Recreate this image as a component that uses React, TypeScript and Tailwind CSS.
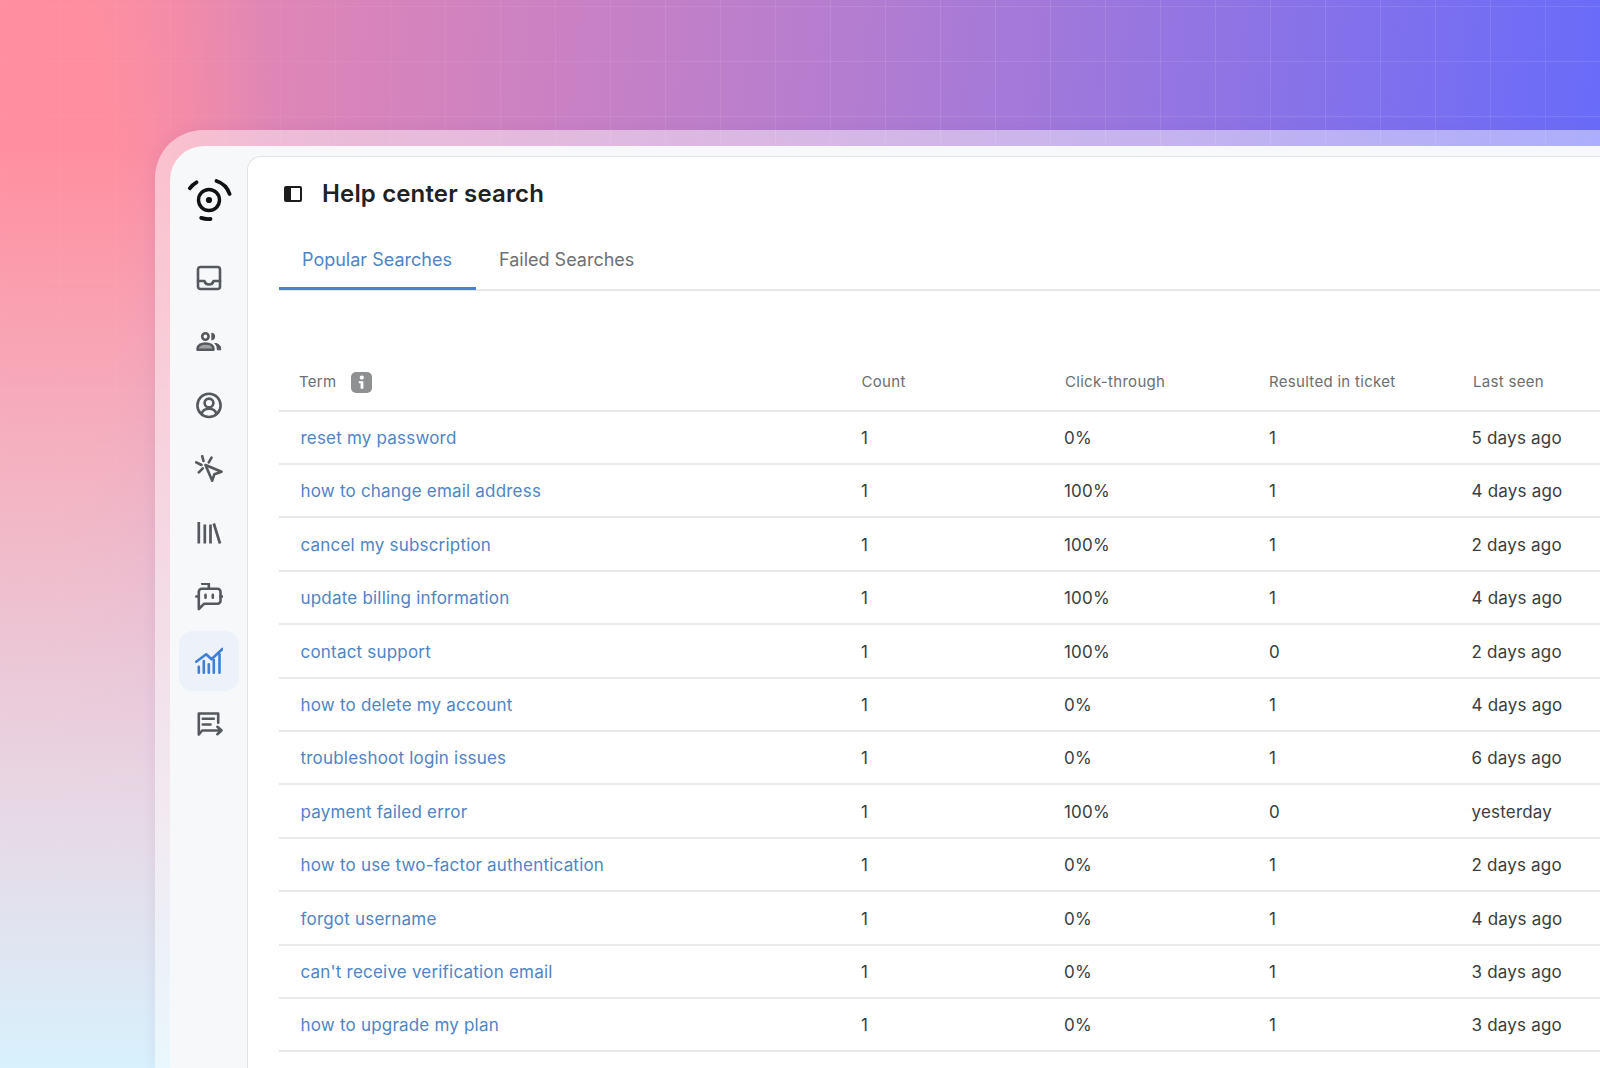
const ROWS = [
  { term: "reset my password", clicks: "0%", ticket: "1", seen: "5 days ago" },
  { term: "how to change email address", clicks: "100%", ticket: "1", seen: "4 days ago" },
  { term: "cancel my subscription", clicks: "100%", ticket: "1", seen: "2 days ago" },
  { term: "update billing information", clicks: "100%", ticket: "1", seen: "4 days ago" },
  { term: "contact support", clicks: "100%", ticket: "0", seen: "2 days ago" },
  { term: "how to delete my account", clicks: "0%", ticket: "1", seen: "4 days ago" },
  { term: "troubleshoot login issues", clicks: "0%", ticket: "1", seen: "6 days ago" },
  { term: "payment failed error", clicks: "100%", ticket: "0", seen: "yesterday" },
  { term: "how to use two-factor authentication", clicks: "0%", ticket: "1", seen: "2 days ago" },
  { term: "forgot username", clicks: "0%", ticket: "1", seen: "4 days ago" },
  { term: "can't receive verification email", clicks: "0%", ticket: "1", seen: "3 days ago" },
  { term: "how to upgrade my plan", clicks: "0%", ticket: "1", seen: "3 days ago" },
];

const COLS = "grid grid-cols-[560px_204px_204px_203px_200px]";

function Icon({ children }: { children: React.ReactNode }) {
  return (
    <svg
      width="28"
      height="28"
      viewBox="0 0 28 28"
      fill="none"
      stroke="currentColor"
      strokeWidth="2.6"
      strokeLinecap="round"
      strokeLinejoin="round"
    >
      {children}
    </svg>
  );
}

function Logo() {
  return (
    <svg width="48" height="48" viewBox="0 0 48 48" fill="none" stroke="#111" strokeWidth="3.8" strokeLinecap="round">
      <circle cx="24" cy="24" r="10.5" strokeWidth="3.4" />
      <circle cx="24" cy="24" r="3.1" fill="#111" stroke="none" />
      <path d="M31.5 5A20.5 20.5 0 0 1 44.6 18" />
      <path d="M4.8 12.3A21 21 0 0 1 11.5 6.3" />
      <path d="M16.2 41.9A21 21 0 0 0 25.5 43" />
    </svg>
  );
}

const NAV = [
  <Icon key="inbox">
    <rect x="3" y="3" width="22" height="22" rx="2.5" />
    <path d="M3 17h6.5c.5 2.5 2 3.5 4.5 3.5s4-1 4.5-3.5H25" />
  </Icon>,
  <Icon key="users">
    <circle cx="10.4" cy="8.5" r="3.2" />
    <path d="M17 5.4a3.2 3.2 0 0 1 0 6.2z" fill="currentColor" strokeWidth="1.4" />
    <path d="M2.6 21.8v-1c0-3.4 3.4-5.3 7.9-5.3s7.9 1.9 7.9 5.3v1z" fill="currentColor" fillOpacity="0.55" />
    <path d="M21.5 15.6c2.4.8 4.2 2.4 4.2 4.8v1.4h-3.4c0-2.5-.4-4.6-2.2-6z" fill="currentColor" strokeWidth="1" />
  </Icon>,
  <Icon key="profile">
    <circle cx="14" cy="13.4" r="11.6" />
    <circle cx="14" cy="11" r="4.4" />
    <path d="M6.5 22c1-3.6 4-5.2 7.5-5.2s6.5 1.6 7.5 5.2" />
  </Icon>,
  <Icon key="click">
    <path d="M10.5 10 26.5 16.7 19.4 19.2 17.2 25.7z" />
    <path d="M7.2 1.2 8.5 6M16.5 2.7 13.8 7.3M1.2 7.3 6.5 10M3.8 17.3 7.8 13.3" />
  </Icon>,
  <Icon key="library">
    <path d="M3.8 3V24.5M9.8 5.5V24.5M15.5 5.5V24.5M18.8 4.5 25 24.5" strokeLinecap="butt" strokeWidth="2.7" />
  </Icon>,
  <Icon key="bot">
    <path d="M6.8 5.8h15.7a3 3 0 0 1 3 3v9a3 3 0 0 1-3 3H9l-5.2 5.2V8.8a3 3 0 0 1 3-3z" />
    <path d="M7.2 .8h6.6v5M1.3 13.5h2.4M25.6 13.5h2M10.5 11.8v3M17.8 11.8v3" />
  </Icon>,
  <Icon key="chart">
    <path d="M1.2 14.7 11.2 7.3 16.5 12.3 27.4 2M3.8 25.7v-6M8.8 25.7V14M13.8 25.7v-8.4M18.8 25.7V13M24.5 25.7V7.3" />
  </Icon>,
  <Icon key="report">
    <path d="M16.5 19.5H7.2l-3.4 4v-21h19.4v9.3M7.8 7.8h11M7.8 13.5h7.7M15.8 19.5h10.7M22.4 15.8l4.1 3.7-4.1 3.7" />
  </Icon>,
];

export default function App() {
  return (
    <div className="relative h-[1068px] w-[1600px] overflow-hidden bg-[linear-gradient(180deg,rgba(240,200,215,0)_14%,rgba(232,215,228,1)_75%,rgba(216,241,253,1)_100%),radial-gradient(ellipse_250px_800px_at_30px_250px,#ff8fa0_0,#ff8fa0_35%,rgba(255,143,160,0)_100%),linear-gradient(96deg,#f08ca9_0%,#d884bb_22%,#b47dd0_50%,#8f74e4_72%,#5f69ff_100%)] pl-[155px] pt-[130px] [font-family:Inter,sans-serif]">
      <div className="pointer-events-none absolute inset-0 bg-[linear-gradient(to_right,rgba(255,255,255,0.1)_1px,transparent_1px),linear-gradient(to_bottom,rgba(255,255,255,0.1)_1px,transparent_1px)] bg-[size:55px_55px] bg-[position:5px_6px] [mask-image:linear-gradient(to_right,rgba(0,0,0,0.25),#000_60%)]" />
      <div className="relative h-full rounded-tl-[48px] bg-white/45 pl-[15px] pt-[16px] shadow-[0_0_14px_rgba(120,90,160,0.12)]">
        <div className="flex h-full rounded-tl-[34px] bg-[#f6f8fa]">
          <aside className="flex w-[77px] shrink-0 flex-col items-center pt-[30px]">
            <Logo />
            <nav className="mt-[24px] flex flex-col gap-[3.8px]">
              {NAV.map((icon, i) => (
                <div
                  key={i}
                  className={
                    i === 6
                      ? "flex h-[60px] w-[60px] items-center justify-center rounded-[14px] bg-[#edf2fa] text-[#3f7fd6]"
                      : "flex h-[60px] w-[60px] items-center justify-center text-[#55585c]"
                  }
                >
                  {icon}
                </div>
              ))}
            </nav>
          </aside>

          <main className="mt-[10px] min-w-0 flex-1 overflow-hidden rounded-tl-[14px] border-l border-t border-[#dfe2e5] bg-white">
            <header className="flex h-[74px] items-center gap-[20px] pl-[36px]">
              <svg width="18" height="16" viewBox="0 0 18 16">
                <rect x="1" y="1" width="16" height="14" rx="1" fill="none" stroke="#1c1c1c" strokeWidth="2" />
                <rect x="1" y="1" width="6" height="14" fill="#1c1c1c" />
              </svg>
              <h1 className="text-[24px] font-semibold tracking-[0.15px] text-[#1f2123]">Help center search</h1>
            </header>

            <div className="pl-[31px]">
              <div className="flex h-[60px] border-b-2 border-[#e6e7e9] text-[18px]">
                <div className="-mb-[1px] flex w-[197px] items-center border-b-[3px] border-[#4a80cf] pl-[23px] text-[#5084c4]">
                  Popular Searches
                </div>
                <div className="-mb-[1px] flex items-center border-b-[3px] border-transparent pl-[23px] text-[#6e7073]">Failed Searches</div>
              </div>

              <div className={`${COLS} mt-[60.6px] h-[60px] items-center border-b-2 border-[#e8e9eb] pt-[3px] text-[15px] tracking-[0.3px] text-[#6c6e70]`}>
                <div className="flex items-center gap-[15px] pl-[20px]">
                  Term
                  <svg width="21" height="21" viewBox="0 0 21 21">
                    <rect width="21" height="21" rx="5" fill="#8f9092" />
                    <circle cx="10.8" cy="5.6" r="2.1" fill="#fff" />
                    <path d="M7.8 9.2h4.6v7.6h-2.8v-5.6H7.8z" fill="#fff" />
                  </svg>
                </div>
                <div className="pl-[22.5px]">Count</div>
                <div className="pl-[22px]">Click-through</div>
                <div className="pl-[22px]">Resulted in ticket</div>
                <div className="pl-[23px]">Last seen</div>
              </div>

              {ROWS.map((r) => (
                <div key={r.term} className={`${COLS} h-[53.4px] items-center border-b-2 border-[#e8e9eb] pt-[3px] text-[17px] tracking-[0.2px] text-[#3b3d40]`}>
                  <div className="pl-[21.5px] text-[#5084c4]">{r.term}</div>
                  <div className="pl-[22px]">1</div>
                  <div className="pl-[21px]">{r.clicks}</div>
                  <div className="pl-[22px]">{r.ticket}</div>
                  <div className="pl-[21.5px]">{r.seen}</div>
                </div>
              ))}
            </div>
          </main>
        </div>
      </div>
    </div>
  );
}
